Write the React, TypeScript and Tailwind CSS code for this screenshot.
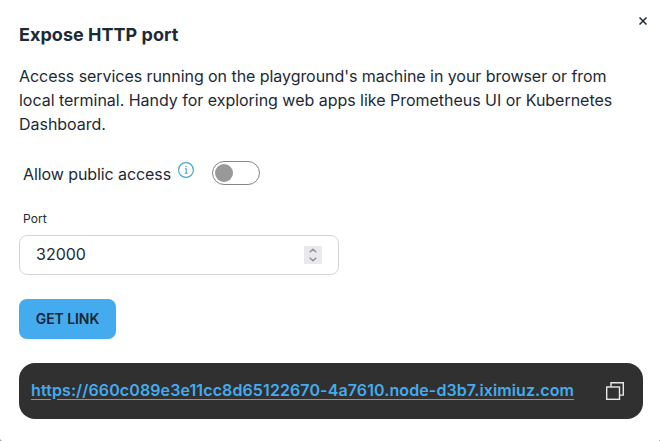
import { useState } from 'react';

function InfoIcon() {
  return (
    <svg className="mt-px size-4 shrink-0" viewBox="0 0 16 16" fill="none" stroke="#45a9c6">
      <circle cx="8" cy="8" r="7.4" strokeWidth="1.2" />
      <path d="M7 6.9h1.3v4M6.7 11.2h3" strokeWidth="1.1" />
      <path d="M7.5 4.5h1.2" strokeWidth="1.1" />
    </svg>
  );
}

function CopyIcon() {
  return (
    <svg className="size-[18px]" viewBox="0 0 18 18" fill="none" stroke="#e8e8e8" strokeWidth="1.4">
      <path d="M5 4.7V.7h12.3v12.4H14" />
      <rect x=".7" y="5" width="12.8" height="12.3" />
    </svg>
  );
}

function Stepper() {
  return (
    <span className="flex size-[18px] items-center justify-center bg-[#e9e9ed]">
      <svg className="h-[14px] w-[8px]" viewBox="0 0 8 14" fill="none" stroke="#8f8f9d" strokeWidth="1.5">
        <path d="M.7 4.3 4 1.3l3.3 3M.7 9.7 4 12.7l3.3-3" />
      </svg>
    </span>
  );
}

export default function App() {
  const [open, setOpen] = useState(false);
  return (
    <main className="relative h-[441px] w-[660px] overflow-hidden bg-white px-[19px] pt-[23px] font-['Inter',sans-serif] text-base leading-6 text-[#1c2a36]">
      <button aria-label="Close" className="absolute top-[16px] right-[12px] flex size-[10px] items-center justify-center">
        <svg className="size-[8px]" viewBox="0 0 8 8" stroke="#1c2a36" strokeWidth="1.5">
          <path d="M.5.5l7 7M7.5.5l-7 7" />
        </svg>
      </button>
      <h1 className="text-lg leading-6 font-bold tracking-[0.03px]">Expose HTTP port</h1>
      <p className="mt-[17px] w-[602px]">
        <span className="tracking-[-0.055px]">Access services running on the playground's machine in your browser or from </span>
        <span className="tracking-[-0.025px]">local terminal. Handy for exploring web apps like Prometheus UI or Kubernetes Dashboard.</span>
      </p>
      <div className="mt-[25px] flex h-6 items-start pl-1">
        <span className="mt-[1px] tracking-[-0.08px]">Allow public access</span>
        <span className="ml-[7px]">
          <InfoIcon />
        </span>
        <button
          role="switch"
          aria-checked={open}
          onClick={() => setOpen(!open)}
          className="ml-[18px] flex h-6 w-12 items-center rounded-full border border-[#858585] px-[2px] aria-checked:justify-end"
        >
          <span className="size-[18px] rounded-full bg-[#999999]" />
        </button>
      </div>
      <label className="mt-[26px] block pl-1 text-xs leading-4 tracking-[0.1px]">Port</label>
      <div className="mt-[8px] flex h-10 w-[320px] items-center justify-between rounded-lg border border-[#d2d4d7] pr-4 pl-4">
        <span className="-mt-[2px]">32000</span>
        <Stepper />
      </div>
      <button className="mt-6 flex h-10 w-[97px] items-center justify-center rounded-lg bg-[#44acee] text-sm font-semibold tracking-[-0.08px] text-[#17252f]">
        GET LINK
      </button>
      <div className="mt-6 flex h-14 w-[624px] items-center justify-between rounded-2xl bg-[#303030] pr-[19px] pl-3">
        <a className="-mt-[3px] font-semibold tracking-[0.107px] text-[#44acee] underline underline-offset-[3px]">
          https://660c089e3e11cc8d65122670-4a7610.node-d3b7.iximiuz.com
        </a>
        <CopyIcon />
      </div>
      <span className="absolute bottom-0 left-0 h-[2px] w-[2px] bg-[#a8a8a8] [clip-path:polygon(0_0,100%_100%,0_100%)]" />
      <span className="absolute right-0 bottom-0 size-px bg-[#b0b0b0]" />
    </main>
  );
}
